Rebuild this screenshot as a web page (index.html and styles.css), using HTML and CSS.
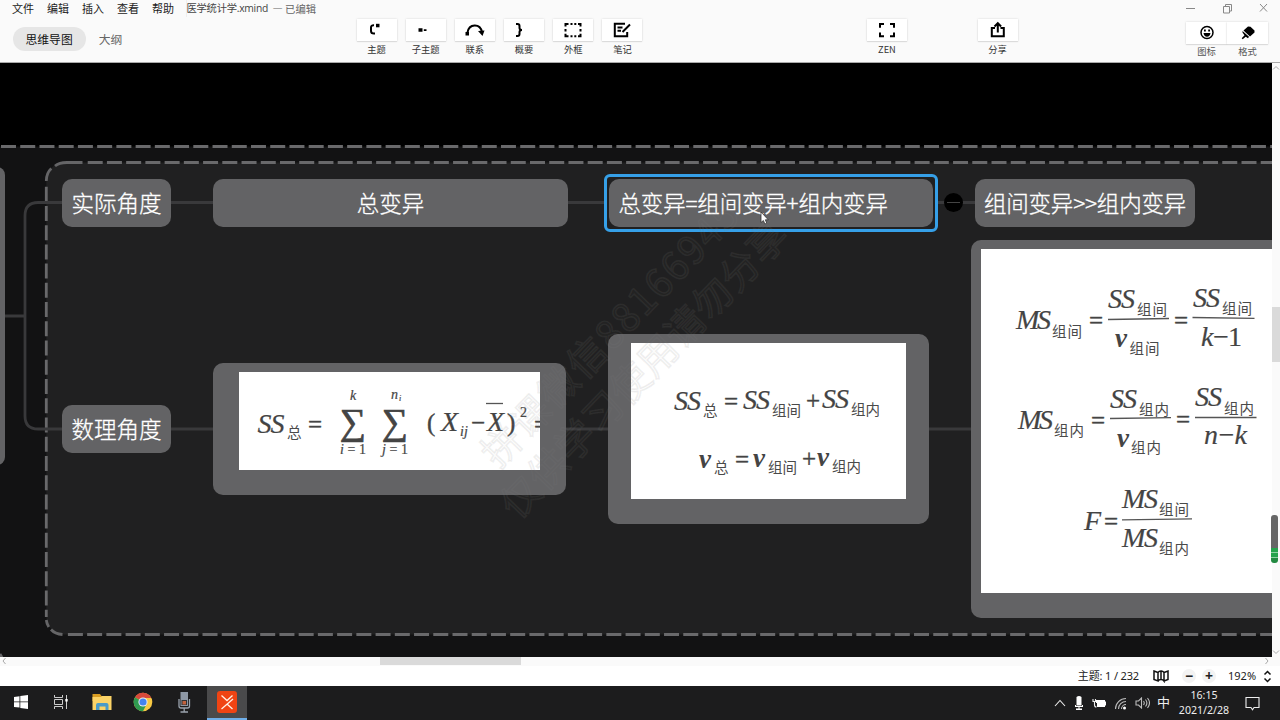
FILE: index.html
```html
<!DOCTYPE html>
<html lang="zh-CN">
<head>
<meta charset="utf-8">
<title>医学统计学.xmind</title>
<link rel="stylesheet" href="styles.css">
</head>
<body>
<div class="app">
  <header class="header">
    <div class="titlebar">
      <nav class="menus"><span>文件</span><span>编辑</span><span>插入</span><span>查看</span><span>帮助</span></nav>
      <span class="doc">医学统计学.xmind</span><span class="edited">— 已编辑</span>
      <svg class="winbtns" width="82" height="12" viewBox="0 0 82 12"><path d="M0 5.500h9M37.500 3.500h6v6.500h-6zM39.500 3.500v-2h6v6.500h-2M74 1l7 7.500M81 1l-7 7.500"/></svg>
    </div>
    <div class="toolbar">
      <div class="tabs"><span class="tab on">思维导图</span><span class="tab">大纲</span></div>
      <div class="tools">
        <div class="tool"><div class="btn"><svg class="ic" width="24" height="20" viewBox="0 0 24 20"><path class="s" d="M9 5.200q-3-.2-3 2.300v3.500q0 2.500 3 2.500h1"/><path d="M11 3.800h3.500v3.500H11z"/></svg></div>主题</div>
        <div class="tool"><div class="btn"><svg class="ic" width="24" height="20" viewBox="0 0 24 20"><path d="M4.500 8.300h4v3.500h-4zM9.800 9.200h2.700V11H9.800z"/></svg></div>子主题</div>
        <div class="tool"><div class="btn"><svg class="ic" width="24" height="20" viewBox="0 0 24 20"><path class="s" d="M4.500 12.500C6 3.500 17 3 19 12"/><path d="M2.500 12H6v3.500H2.500zM15 11l6.500-.5L19.500 16z"/></svg></div>联系</div>
        <div class="tool"><div class="btn"><svg class="ic" width="24" height="20" viewBox="0 0 24 20"><path class="s" d="M4 4h1.500q2 0 2 2v2q0 2 2.500 2-2.500 0-2.500 2v2q0 2-2 2H4"/></svg></div>概要</div>
        <div class="tool"><div class="btn"><svg class="ic" width="24" height="20" viewBox="0 0 24 20"><path class="s" d="M4.500 6.500V4h3M9.500 4h2M13.300 4h2M17 4h2.500v2.500M19.500 9v2.500M19.500 13.700v2.500H17M15.300 16.200h-2M11.500 16.200h-2M7.500 16.200h-3v-2.500M4.500 11.500V9"/></svg></div>外框</div>
        <div class="tool"><div class="btn"><svg class="ic" width="24" height="20" viewBox="0 0 24 20"><path class="s" d="M15 3.800H4.800v12.400h12.400V12M7.500 7.500h5M7.500 10.800h3.500M12.500 12L20 4.500"/></svg></div>笔记</div>
      </div>
      <div class="tool zen"><div class="btn"><svg class="ic" width="24" height="20" viewBox="0 0 24 20"><path class="s" d="M5 7.800V4h4M15 4h4v3.800M19 12.500v3.800h-4M9 16.300H5v-3.800"/></svg></div>ZEN</div>
      <div class="tool share"><div class="btn"><svg class="ic" width="24" height="20" viewBox="0 0 24 20"><path class="s" d="M9 8H5.800v8.200h12V8h-3.300M11.800 12.500V4M8.500 6.500l3.300-3.300 3.300 3.300"/></svg></div>分享</div>
      <div class="pair">
        <div class="tool"><div class="btn"><svg class="ic" width="24" height="20" viewBox="0 0 24 20"><circle class="t" cx="12" cy="9.500" r="6"/><path d="M8.500 10h7q-.5 3.700-3.500 3.700T8.500 10zM9 6.500h1.800v2H9zM13.200 6.500H15v2h-1.800z"/></svg></div>图标</div>
        <div class="tool"><div class="btn"><svg class="ic" width="24" height="20" viewBox="0 0 24 20"><path d="M12 3.500l2.500.2L18.500 7.500v2l-4.500 4-6.500-6zM6.500 8l6.500 5.800-1 1.500-2.300-1.600-3 2.600-1-1 2.800-3-2-2.800z"/></svg></div>格式</div>
      </div>
    </div>
  </header>

  <div class="work">
    <main class="canvas">
      <svg class="links" width="1272" height="594" viewBox="0 63 1272 594">
        <rect class="outer" x="-30" y="146.500" width="1340" height="530"/>
        <rect class="inner" x="46.300" y="162.500" width="1300" height="472" rx="18"/>
        <path class="dash" d="M1 146.500H1272"/>
        <path class="dash" d="M87.700 162.500H1272"/>
        <path class="dash" d="M46.300 186.700V617"/>
        <path class="dash" d="M67.900 634.500H1272"/>
        <path class="edge" d="M46.300 181q0-8 5-12.500M55 166q4-3.500 12-3.500h15.500M46.300 620q.5 4 2.500 7M51 629.500q4 4.500 11.500 5M0 654q1.500 2 2 4"/>
        <path class="link" d="M4 316h21M62 202.500H38q-13 0-13 13V416q0 13 13 13h24M171 202.500h42M171 429h42M568 202.500h37M566 429h42M938 202.500h37M929 429h42"/>
      </svg>
      <div class="node stub"></div>
      <div class="node n1">实际角度</div>
      <div class="node n2">总变异</div>
      <div class="node n3">总变异=组间变异+组内变异</div>
      <div class="ring"></div>
      <div class="fold"></div>
      <div class="node n4">组间变异&gt;&gt;组内变异</div>
      <div class="node n5">数理角度</div>
      <div class="node pic p1">
        <svg class="math" width="301" height="98" viewBox="239 372 301 98">
          <text x="257.500" y="433" textLength="27">SS</text><text class="c" x="287" y="438">总</text>
          <text class="r" x="308" y="433" textLength="14">=</text>
          <text class="g" x="340" y="434">∑</text><text class="g" x="382" y="434">∑</text>
          <text class="m" x="350" y="400">k</text><text class="m" x="391" y="399">n</text><text class="xs" x="399" y="401">i</text>
          <text class="m" x="340" y="454" textLength="26">i <tspan class="u">= 1</tspan></text><text class="m" x="382" y="454" textLength="26">j <tspan class="u">= 1</tspan></text>
          <text class="r" x="427" y="431">(</text><text x="441" y="431">X</text><text class="m" x="460" y="436" textLength="8">ij</text>
          <text class="r" x="471" y="431">−</text><text x="487" y="431">X</text><path d="M486 403.500h17"/>
          <text class="r" x="507" y="431">)</text><text class="m u" x="520" y="417">2</text><text class="r" x="534" y="433">=</text>
        </svg>
      </div>
      <div class="node pic p2">
        <svg class="math" width="275" height="156" viewBox="631 343 275 156">
          <text x="674" y="410" textLength="27">SS</text><text class="c" x="703" y="416">总</text><text class="r" x="724" y="410">=</text>
          <text x="743" y="409" textLength="27">SS</text><text class="c" x="772" y="415.500" textLength="29">组间</text><text class="r" x="806" y="409">+</text>
          <text x="822" y="408" textLength="27">SS</text><text class="c" x="851" y="415" textLength="29">组内</text>
          <text class="b" x="699" y="468">ν</text><text class="c" x="714" y="473">总</text><text class="r" x="735" y="467.500">=</text>
          <text class="b" x="753" y="467">ν</text><text class="c" x="768" y="473" textLength="29">组间</text><text class="r" x="802" y="467">+</text>
          <text class="b" x="817" y="466">ν</text><text class="c" x="832" y="472" textLength="29">组内</text>
        </svg>
      </div>
      <div class="node pic p3">
        <svg class="math" width="291" height="344" viewBox="981 249 291 344">
          <text x="1016" y="329" textLength="35">MS</text><text class="c" x="1052" y="336.500" textLength="30">组间</text><text class="r" x="1089" y="329">=</text>
          <text x="1108" y="308" textLength="27">SS</text><text class="c" x="1137" y="315" textLength="30">组间</text><path d="M1108 319.500l61-1"/>
          <text class="b" x="1115" y="347">ν</text><text class="c" x="1129.500" y="354" textLength="30">组间</text><text class="r" x="1174" y="329">=</text>
          <text x="1193" y="307" textLength="27">SS</text><text class="c" x="1222" y="314" textLength="30">组间</text><path d="M1192.500 317.500l62 .8"/><text x="1201" y="346" textLength="41">k−<tspan class="u">1</tspan></text>
          <text x="1018" y="429" textLength="35">MS</text><text class="c" x="1054" y="436" textLength="30">组内</text><text class="r" x="1091" y="429">=</text>
          <text x="1110" y="407.500" textLength="27">SS</text><text class="c" x="1139" y="415" textLength="30">组内</text><path d="M1110 418.500l61-.8"/>
          <text class="b" x="1117" y="446.500">ν</text><text class="c" x="1131" y="453" textLength="30">组内</text><text class="r" x="1176" y="428">=</text>
          <text x="1195" y="406" textLength="27">SS</text><text class="c" x="1224" y="414" textLength="30">组内</text><path d="M1195 417.500h61.500"/><text x="1204" y="444" textLength="43">n−k</text>
          <text x="1084" y="529.500">F</text><text class="r" x="1104" y="530">=</text>
          <text x="1122" y="508" textLength="36">MS</text><text class="c" x="1159" y="515" textLength="30">组间</text><path d="M1122 519.800l70-1"/>
          <text x="1122" y="547" textLength="36">MS</text><text class="c" x="1159" y="554" textLength="30">组内</text>
        </svg>
      </div>
      <svg class="mark" width="1272" height="594" viewBox="0 63 1272 594">
        <text transform="translate(610 334) rotate(-46)" y="14" textLength="350">拼课微信88166945</text>
        <text transform="translate(644 369.500) rotate(-46)" y="14" textLength="394">仅供学习使用请勿分享</text>
      </svg>
      <svg class="cursor" width="10" height="14" viewBox="0 0 10 14"><path d="M1 1v10.500l2.400-2 1.500 3.500 1.900-.8-1.500-3.400h3z"/></svg>
    </main>
    <aside class="vbar"><svg width="8" height="6" viewBox="0 0 8 6"><path d="M1 4.500l3-3 3 3"/></svg><span class="vthumb"></span><svg width="8" height="6" viewBox="0 0 8 6"><path d="M1 1.500l3 3 3-3"/></svg><span class="meter"></span></aside>
  </div>
  <div class="hbar"><svg width="8" height="8" viewBox="0 0 8 8"><path d="M5.500 1L3 4l2.500 3"/></svg><span class="hthumb"></span><svg width="8" height="8" viewBox="0 0 8 8"><path d="M2.500 1L5 4 2.500 7"/></svg></div>

  <div class="status">
    <span class="count">主题: 1 / 232</span>
    <svg class="map" width="16" height="14" viewBox="0 0 16 14"><path d="M1 2l4 1.500V12L1 10.500zM5 3.500Q6 2 8 2v8.500Q6 10.500 5 12M8 2q2 0 3 1.500V12q-1-1.500-3-1.500M11 3.500L15 2v8.500L11 12"/></svg>
    <span class="zb">−</span><span class="zb plus">+</span><span class="pct">192%</span>
    <svg class="ud" width="9" height="13" viewBox="0 0 9 13"><path d="M1.500 4.500l3-3 3 3M1.500 8.500l3 3 3-3"/></svg>
  </div>

  <footer class="taskbar">
    <div class="apps">
      <span class="app-i"><svg width="16" height="16" viewBox="0 0 16 16"><path fill="#fff" d="M1 3l5.500-.8v5.300H1zM7.300 2L15 1v6.500H7.300zM1 8.300h5.500v5.300L1 13zM7.300 8.300H15V15l-7.700-1z"/></svg></span>
      <span class="app-i v"><svg width="16" height="16" viewBox="0 0 16 16"><path fill="none" stroke="#ccc" d="M1.500 1v2.500h8V1M1.500 5.500h8v5h-8zM1.500 15v-2.500h8V15M13.500 1v14"/><path fill="#fff" d="M12.300 5h2.400v2.500h-2.400z"/></svg></span>
      <span class="app-i"><svg width="20" height="18" viewBox="0 0 20 18"><path fill="#d99d22" d="M.5 1H8l1.500 2H19v5H.5z"/><path fill="#fbd367" d="M.5 4H9l1-1h9.500v14H.5z"/><path fill="#4b9bc8" d="M4 17v-5q0-2 2-2h8.500q2 0 2 2v5h-3v-3.500h-6V17z"/></svg></span>
      <span class="app-i"><svg width="20" height="20" viewBox="0 0 20 20"><circle cx="10" cy="10" r="9.300" fill="#f8c944"/><path fill="#d84a3b" d="M10 10L2 5.200A9.300 9.300 0 0 1 18.300 6H10z"/><path fill="#2f9a50" d="M10 10L2 5.200A9.300 9.300 0 0 0 10 19.300L13.700 12z"/><circle cx="10" cy="10" r="4.600" fill="#eee"/><circle cx="10" cy="10" r="3.600" fill="#4384ef"/></svg></span>
      <span class="app-i"><svg width="14" height="22" viewBox="0 0 14 22"><path fill="#8e98a5" d="M3.500 1H11v14H3.500z"/><path fill="#333" d="M4.500 9H10v5H4.500z"/><path fill="#c1623e" d="M5.500 10H9v3.500H5.500z"/><path fill="none" stroke="#9aa3ad" stroke-width="1.300" d="M2 8v7q0 2 2 2h6.500q2 0 2-2V8M7.200 17v4M3.500 21H11"/></svg></span>
      <span class="app-i on"><svg width="20" height="22" viewBox="0 0 20 22"><rect width="20" height="22" rx="3" fill="#f04413"/><path fill="none" stroke="#fff1e6" stroke-width="1.300" d="M4.500 4.500L10 9.500l5.500-5M4.500 18L16 8M15.500 18L10 13"/></svg></span>
    </div>
    <div class="tray">
      <svg width="12" height="8" viewBox="0 0 12 8"><path class="l" d="M1 7l5-5.500L11 7"/></svg>
      <svg width="10" height="16" viewBox="0 0 10 16"><path fill="#fff" d="M2.500 2q2.500-2 5 0v8.500h-5zM1 10v2h8v-2H8v1H2v-1zM4.500 12h1v2h-1zM2 13.500h6V15H2z"/></svg>
      <svg width="14" height="12" viewBox="0 0 14 12"><path fill="#fff" d="M4 3h9v1.500h1v4h-1V10H5V6H4z"/><path class="l" d="M1 2v2.500h2.500V2M2.500 5v3q0 2 2 2"/></svg>
      <svg width="13" height="13" viewBox="0 0 13 13"><path class="l dim" d="M1.500 12A10.500 10.500 0 0 1 12 1.500M4.500 12A7.500 7.500 0 0 1 12 4.500M7.500 12A4.500 4.500 0 0 1 12 7.500"/><circle cx="10.500" cy="11" r="1.500" fill="#fff"/></svg>
      <svg width="15" height="12" viewBox="0 0 15 12"><path class="l dim" d="M1 4h2.500L6.500 1v10L3.500 8H1zM8.500 4q1.500 2 0 4M10.500 2.500q2.800 3.500 0 7M12.500 1q4 5 0 10"/></svg>
      <span class="ime">中</span>
      <div class="clock"><span>16:15</span><span>2021/2/28</span></div>
      <svg width="15" height="15" viewBox="0 0 15 15"><path class="l" d="M1 1.500h13v10H9l-1.500 2.200L6 11.500H1z"/></svg>
    </div>
  </footer>
</div>
</body>
</html>
```

FILE: styles.css
```css
* { box-sizing: border-box; }
body { margin: 0; overflow: hidden; font-family: "Noto Sans", "Noto Sans CJK SC", sans-serif; }
.app { width: 1280px; height: 720px; display: flex; flex-direction: column; background: #fff; }
svg { display: block; flex: none; }
span, .tool { white-space: nowrap; }

.header { height: 63px; background: #fafafa; border-bottom: 1px solid #aaa; }
.titlebar { height: 18px; display: flex; align-items: center; padding: 0 12px 1px; font-size: 11px; line-height: 17px; color: #222; }
.menus { display: flex; gap: 13px; width: 174.500px; border-right: 1px solid #eee; font-family: "Noto Sans CJK SC", sans-serif; }
.doc { width: 86px; font-family: "Open Sans", "Noto Sans CJK SC", sans-serif; font-size: 10.300px; letter-spacing: -0.250px; color: #444; }
.edited { color: #666; font-family: "Noto Sans CJK SC", sans-serif; font-size: 10.300px; }
.winbtns { margin-left: auto; fill: none; stroke: #888; stroke-width: 1; }
.toolbar { display: flex; align-items: flex-start; padding-left: 12.500px; }
.tabs { display: flex; align-items: center; width: 344px; padding-top: 9px; }
.tab { height: 24px; padding: 0 13px; border-radius: 12px; font: 11.800px/24px "Noto Sans CJK SC", sans-serif; color: #666; }
.tab.on { background: #e6e6e6; color: #111; }
.tools { display: flex; gap: 9.200px; }
.tool { width: 40px; padding-top: 1px; display: flex; flex-direction: column; align-items: center; font: 9.300px/17px "Noto Sans CJK SC", sans-serif; color: #333; }
.btn { width: 40px; height: 22px; display: flex; align-items: center; justify-content: center; background: #fff; box-shadow: 0 0 2px rgba(0,0,0,.15), 0 1px 1px rgba(0,0,0,.08); }
.ic { fill: #000; }
.ic .s, .ic .t { fill: none; stroke: #000; stroke-width: 2; }
.ic .t { stroke-width: 1.500; }
.zen { margin-left: 224.500px; }
.share { margin-left: 70.700px; }
.pair { display: flex; margin-left: 168.500px; padding-top: 2.500px; }
.pair .tool { width: 41px; color: #555; line-height: 15.500px; }
.pair .btn { width: 41px; }

.work { display: flex; height: 594px; }
.canvas { position: relative; width: 1272px; overflow: hidden; background: #000; }
.links, .mark { position: absolute; left: 0; top: 0; }
.outer { fill: #121213; }
.inner { fill: #202021; }
.dash { fill: none; stroke: #69696b; stroke-width: 2.800; stroke-dasharray: 15 4.230; }
.edge { fill: none; stroke: #656567; stroke-width: 2.800; }
.link { fill: none; stroke: #39393b; stroke-width: 2.800; }
.node { position: absolute; display: flex; align-items: center; justify-content: center; background: #636365; border-radius: 10px; color: #fff; font: 300 22.500px/45px "Noto Sans CJK SC", sans-serif; -webkit-text-stroke: .3px #fff; white-space: nowrap; padding-bottom: 2px; }
.stub { left: -20px; top: 104px; width: 24.500px; height: 298px; border-radius: 8px; }
.n1 { left: 62px; top: 116px; width: 109px; height: 48px; }
.n2 { left: 213px; top: 116px; width: 355px; height: 48px; }
.n3 { left: 609px; top: 116px; width: 324px; height: 48px; justify-content: flex-start; padding-left: 9.500px; letter-spacing: -0.180px; }
.n4 { left: 975px; top: 116px; width: 220px; height: 48px; letter-spacing: -0.200px; }
.n5 { left: 62px; top: 342px; width: 109px; height: 48px; }
.ring { position: absolute; left: 604px; top: 111px; width: 334px; height: 58px; border: 3px solid #36a0e8; border-radius: 6px; }
.fold { position: absolute; left: 944px; top: 130px; width: 19px; height: 19px; border-radius: 50%; background: linear-gradient(#444, #444) center / 13px 1px no-repeat #000; }
.pic { align-items: flex-start; padding-top: 9px; padding-bottom: 0; -webkit-text-stroke: 0; }
.p1 { left: 213px; top: 300px; width: 353px; height: 132px; }
.p2 { left: 608px; top: 271px; width: 321px; height: 190px; }
.p3 { left: 971px; top: 177px; width: 340px; height: 378px; justify-content: flex-start; padding-left: 10px; }
.math { background: #fff; fill: #444; stroke: #444; stroke-width: .2; font: italic 28px "Liberation Serif", serif; }
.math path { stroke: #555; stroke-width: 1.300; fill: none; }
.math .r { font-style: normal; font-size: 25px; stroke-width: .4; }
.math .u { font-style: normal; }
.math .g { font-style: normal; font-size: 36.500px; stroke-width: .8; }
.math .m { font-size: 14px; }
.math .xs { font-size: 8px; }
.math .b { font-weight: bold; font-size: 27px; stroke: none; }
.math .c { font: 14.500px "Noto Sans CJK SC", sans-serif; fill: #4a4a4a; stroke: none; }
.mark text { font: 39px "Noto Sans CJK SC", sans-serif; text-anchor: middle; fill: rgba(128,128,128,.04); stroke: rgba(128,128,128,.12); stroke-width: 1.600; }
.cursor { position: absolute; left: 760px; top: 148px; fill: #fff; stroke: #333; stroke-width: .8; }

.vbar { position: relative; width: 8px; display: flex; flex-direction: column; justify-content: space-between; background: #fafafa; padding: 2px 0; }
.vbar path, .hbar path { fill: none; stroke: #aaa; }
.vthumb { width: 8px; height: 55px; margin-bottom: 51px; background: #dadada; }
.meter { position: absolute; left: -1px; top: 452px; width: 7px; height: 48px; border-radius: 3px; background: linear-gradient(#666 68%, #24a34c 68%, #24a34c 77%, #8fd3a4 77%, #8fd3a4 79%, #24a34c 79%, #24a34c 88%, #8fd3a4 88%, #8fd3a4 90%, #238a42 90%); }
.hbar { height: 9px; display: flex; align-items: flex-start; background: #fafafa; }
.hthumb { width: 141px; height: 8px; margin-left: 372px; margin-right: auto; background: #dadada; }
.hbar svg:last-child { margin-right: 9px; }

.status { height: 20px; display: flex; align-items: center; justify-content: flex-end; padding-right: 8px; font-size: 11px; line-height: 20px; color: #222; }
.count { margin-right: 14px; letter-spacing: -0.150px; }
.map, .ud { fill: none; stroke: #111; stroke-width: 1.500; }
.map { margin-right: 13px; }
.zb { width: 14px; height: 14px; border-radius: 7px; background: #f3f3f3; font-size: 14px; font-weight: bold; line-height: 13px; text-align: center; }
.plus { margin-left: 6px; }
.pct { margin-left: 12px; margin-right: 8px; width: 27px; }

.taskbar { height: 34px; display: flex; justify-content: space-between; background: #1c1c1d; color: #eee; }
.apps { display: flex; }
.app-i { width: 41px; height: 34px; display: flex; align-items: center; justify-content: center; border-bottom: 2px solid transparent; }
.app-i.v { width: 40px; }
.app-i.on { width: 40px; margin-left: 3px; background: #4a4a4b; border-color: #6faee8; }
.tray { display: flex; align-items: center; gap: 8px; padding-right: 20px; }
.l { fill: none; stroke: #eee; stroke-width: 1.100; }
.dim { stroke: #bbb; }
.ime { margin-left: -1px; font: 13px/32px "Noto Sans CJK SC", sans-serif; padding-bottom: 2px; }
.clock { width: 52px; margin-right: 7px; display: flex; flex-direction: column; align-items: center; font-size: 10.600px; line-height: 15px; }
```
